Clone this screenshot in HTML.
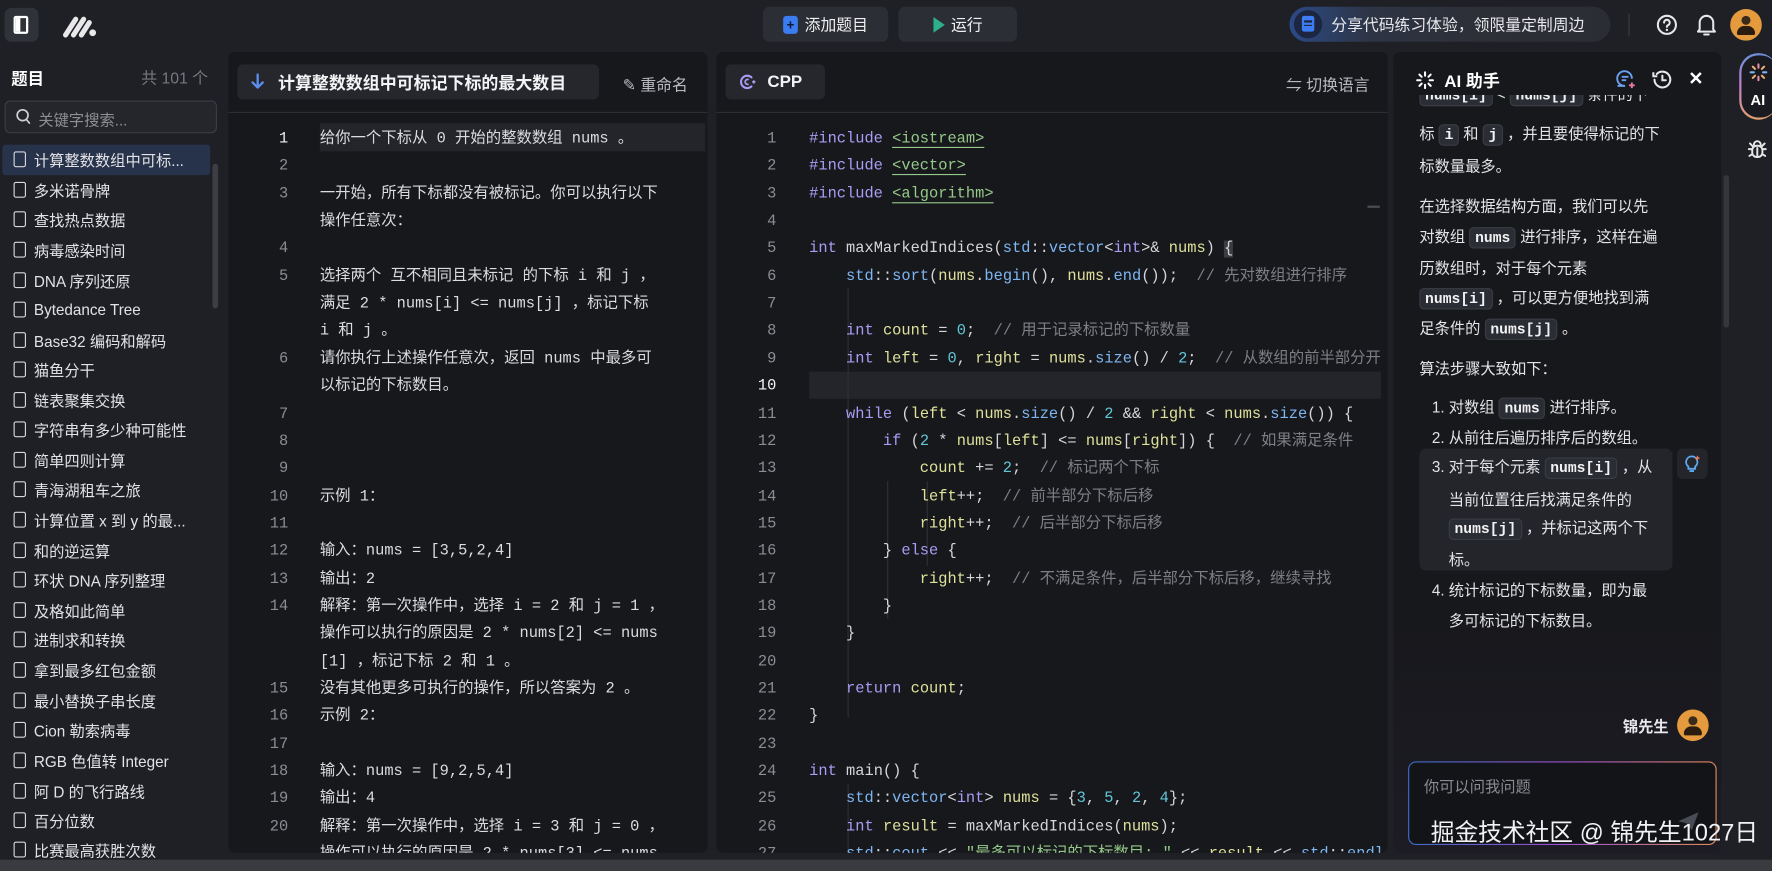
<!DOCTYPE html>
<html><head><meta charset="utf-8">
<style>
html,body{margin:0;padding:0;width:1772px;height:871px;overflow:hidden;background:#1f2025;}
#w{position:relative;width:1568px;height:771px;transform:scale(1.13010,1.12970);transform-origin:0 0;overflow:hidden;background:#1f2025;font-family:"Liberation Sans","Noto Sans CJK SC",sans-serif;color:#e6e6e8;}
.a{position:absolute;}
.btn{position:absolute;background:#2c2e35;border-radius:6px;font-size:14px;color:#f0f0f2;display:flex;align-items:center;justify-content:center;gap:6px;}
.panel{position:absolute;background:#17181c;border-radius:6px;overflow:hidden;}
.mono{font-family:"Liberation Mono","Noto Sans CJK SC",monospace;}
.li{position:absolute;left:12px;font-size:13.5px;color:#e2e2e6;display:flex;align-items:center;gap:7px;height:20px;white-space:nowrap;}
.doc{width:11px;height:14px;border:1.6px solid #d8d8dc;border-radius:2px;box-sizing:border-box;position:relative;}
.row{position:absolute;left:0;height:24.35px;line-height:24.35px;font-size:13.6px;white-space:pre;}
.num{position:absolute;width:40px;text-align:right;color:#8b8d93;}
.k{color:#a99cf5}.f{color:#7eb6f2}.v{color:#dfe09a}.n{color:#62c5d6}.c{color:#7d7f86}.s{color:#95c98a;text-decoration:underline;text-underline-offset:4px}.p{color:#d6d6da}
.ai{position:absolute;left:1256px;font-size:13.5px;color:#e4e4e8;white-space:nowrap;}
.cd{font-family:"Liberation Mono",monospace;font-weight:bold;background:#2b2d34;border:1px solid #3a3c44;border-radius:4px;padding:1px 4px;font-size:13px;color:#f2f2f4;}
</style></head><body><div id="w">

<!-- top bar -->
<div class="a" style="left:4px;top:7px;width:30px;height:30px;background:#30323a;border-radius:6px;"></div>
<div class="a" style="left:12px;top:14px;width:13px;height:16px;border:2px solid #fff;box-sizing:border-box;border-radius:2px;"><div style="position:absolute;left:0;top:0;width:4px;height:12px;background:#fff"></div></div>
<svg class="a" style="left:55px;top:12px" width="32" height="22" viewBox="0 0 32 22"><path d="M3 19 L12 5 M10 19 L19 5 M17 19 L24 8" stroke="#e8e8ea" stroke-width="4.5" stroke-linecap="round"/><circle cx="27" cy="17" r="3" fill="#e8e8ea"/></svg>

<div class="btn" style="left:675px;top:6px;width:111px;height:31px;"><span style="display:inline-block;width:13px;height:16px;background:#3b7cf0;border-radius:3px;color:#0d1b3a;font-size:12px;line-height:16px;text-align:center;font-weight:bold">+</span>添加题目</div>
<div class="btn" style="left:795px;top:6px;width:105px;height:31px;"><span style="display:inline-block;width:0;height:0;border-left:10px solid #2bb08a;border-top:7px solid transparent;border-bottom:7px solid transparent"></span>运行</div>

<div class="a" style="left:1141px;top:6px;width:284px;height:31px;border-radius:16px;background:linear-gradient(90deg,#2c4a86 0%,#2d3444 25%,#2d2f37 60%,#2b2d34 100%);"></div>
<div class="a" style="left:1145px;top:9px;width:25px;height:25px;border-radius:50%;background:#1c2640;"></div>
<div class="a" style="left:1152px;top:14px;width:11px;height:14px;border-radius:2px;background:#3d7cf2;"><div style="margin:4px 2px 0;height:1.5px;background:#1c2640"></div><div style="margin:2px 2px 0;height:1.5px;background:#1c2640"></div></div>
<div class="a" style="left:1178px;top:12px;font-size:14px;color:#e8e8ec;">分享代码练习体验，领限量定制周边</div>
<div class="a" style="left:1441px;top:12px;width:1px;height:20px;background:#3a3c42"></div>
<svg class="a" style="left:1465px;top:12px" width="20" height="20" viewBox="0 0 20 20"><circle cx="10" cy="10" r="8" stroke="#e8e8ea" stroke-width="1.8" fill="none"/><path d="M7.5 8a2.5 2.5 0 1 1 3.5 2.3c-.7.3-1 .8-1 1.5" stroke="#e8e8ea" stroke-width="1.8" fill="none" stroke-linecap="round"/><circle cx="10" cy="14.5" r="1.1" fill="#e8e8ea"/></svg>
<svg class="a" style="left:1500px;top:11px" width="20" height="22" viewBox="0 0 20 22"><path d="M4 15V9a6 6 0 0 1 12 0v6l1.5 2h-15z" stroke="#e8e8ea" stroke-width="1.8" fill="none" stroke-linejoin="round"/><path d="M8 19.5h4" stroke="#e8e8ea" stroke-width="1.8" stroke-linecap="round"/></svg>
<div class="a" style="left:1531px;top:8px;width:28px;height:28px;border-radius:50%;background:#e59a3d;overflow:hidden"><div style="position:absolute;left:10px;top:6px;width:8px;height:8px;border-radius:50%;background:#3a2a1a"></div><div style="position:absolute;left:6px;top:15px;width:16px;height:8px;border-radius:8px 8px 2px 2px;background:#2a1d10"></div></div>

<!-- sidebar -->
<div class="a" style="left:10px;top:59px;font-size:14.5px;font-weight:bold;color:#fff">题目</div>
<div class="a" style="left:125px;top:59px;font-size:14px;color:#76787e">共 101 个</div>
<div class="a" style="left:4px;top:89px;width:188px;height:29px;border:1px solid #3b3d44;border-radius:5px;background:#24262b;box-sizing:border-box"></div>
<svg class="a" style="left:14px;top:96px" width="14" height="15" viewBox="0 0 14 15"><circle cx="6" cy="6" r="4.8" stroke="#d0d0d4" stroke-width="1.5" fill="none"/><path d="M9.5 10l2.5 3" stroke="#d0d0d4" stroke-width="1.5" stroke-linecap="round"/></svg>
<div class="a" style="left:34px;top:95px;font-size:13.5px;color:#8d8f95">关键字搜索...</div>
<div class="a" style="left:2px;top:128px;width:184px;height:27px;background:#27324b;border-radius:3px"></div>
<div class="a" style="left:188px;top:145px;width:5px;height:128px;background:#3c3e44;border-radius:3px"></div>

<div class="li" style="top:131px"><span class="doc"></span>计算整数数组中可标...</div>
<div class="li" style="top:158px"><span class="doc"></span>多米诺骨牌</div>
<div class="li" style="top:184px"><span class="doc"></span>查找热点数据</div>
<div class="li" style="top:211px"><span class="doc"></span>病毒感染时间</div>
<div class="li" style="top:238px"><span class="doc"></span>DNA 序列还原</div>
<div class="li" style="top:264px"><span class="doc"></span>Bytedance Tree</div>
<div class="li" style="top:291px"><span class="doc"></span>Base32 编码和解码</div>
<div class="li" style="top:317px"><span class="doc"></span>猫鱼分干</div>
<div class="li" style="top:344px"><span class="doc"></span>链表聚集交换</div>
<div class="li" style="top:370px"><span class="doc"></span>字符串有多少种可能性</div>
<div class="li" style="top:397px"><span class="doc"></span>简单四则计算</div>
<div class="li" style="top:423px"><span class="doc"></span>青海湖租车之旅</div>
<div class="li" style="top:450px"><span class="doc"></span>计算位置 x 到 y 的最...</div>
<div class="li" style="top:477px"><span class="doc"></span>和的逆运算</div>
<div class="li" style="top:503px"><span class="doc"></span>环状 DNA 序列整理</div>
<div class="li" style="top:530px"><span class="doc"></span>及格如此简单</div>
<div class="li" style="top:556px"><span class="doc"></span>进制求和转换</div>
<div class="li" style="top:583px"><span class="doc"></span>拿到最多红包金额</div>
<div class="li" style="top:610px"><span class="doc"></span>最小替换子串长度</div>
<div class="li" style="top:636px"><span class="doc"></span>Cion 勒索病毒</div>
<div class="li" style="top:663px"><span class="doc"></span>RGB 色值转 Integer</div>
<div class="li" style="top:690px"><span class="doc"></span>阿 D 的飞行路线</div>
<div class="li" style="top:716px"><span class="doc"></span>百分位数</div>
<div class="li" style="top:742px"><span class="doc"></span>比赛最高获胜次数</div>

<!-- problem panel -->
<div class="panel" style="left:202px;top:46px;width:424px;height:709px;">
  <div class="a" style="left:8px;top:11px;width:320px;height:31px;background:#25272d;border-radius:5px"></div>
  <svg class="a" style="left:20px;top:19px" width="12" height="15" viewBox="0 0 12 15"><path d="M6 1v11M1.5 8L6 12.5 10.5 8" stroke="#5b8ff0" stroke-width="2" fill="none" stroke-linecap="round" stroke-linejoin="round"/></svg>
  <div class="a" style="left:44px;top:17px;font-size:15px;font-weight:bold;color:#f4f4f6">计算整数数组中可标记下标的最大数目</div>
  <div class="a" style="left:349px;top:19px;font-size:14px;color:#b8bac0">✎ 重命名</div>
  <div class="a" style="left:0;top:53px;width:424px;height:1px;background:#2c2e34"></div>
  <div class="a" style="left:81px;top:63px;width:341px;height:25px;background:#23252b"></div>
  <div class="a mono" style="left:0;top:66px;width:424px;height:650px;color:#dcdce0">
    <div class="row" style="top:0"><span class="num" style="left:13px;color:#f0f0f2">1</span><span style="position:absolute;left:81px">给你一个下标从 0 开始的整数数组 nums 。</span></div>
    <div class="row" style="top:24.35px"><span class="num" style="left:13px">2</span></div>
    <div class="row" style="top:48.7px"><span class="num" style="left:13px">3</span><span style="position:absolute;left:81px">一开始，所有下标都没有被标记。你可以执行以下</span></div>
    <div class="row" style="top:73.05px"><span style="position:absolute;left:81px">操作任意次：</span></div>
    <div class="row" style="top:97.4px"><span class="num" style="left:13px">4</span></div>
    <div class="row" style="top:121.75px"><span class="num" style="left:13px">5</span><span style="position:absolute;left:81px">选择两个 互不相同且未标记 的下标 i 和 j ，</span></div>
    <div class="row" style="top:146.1px"><span style="position:absolute;left:81px">满足 2 * nums[i] &lt;= nums[j] ，标记下标</span></div>
    <div class="row" style="top:170.45px"><span style="position:absolute;left:81px">i 和 j 。</span></div>
    <div class="row" style="top:194.8px"><span class="num" style="left:13px">6</span><span style="position:absolute;left:81px">请你执行上述操作任意次，返回 nums 中最多可</span></div>
    <div class="row" style="top:219.15px"><span style="position:absolute;left:81px">以标记的下标数目。</span></div>
    <div class="row" style="top:243.5px"><span class="num" style="left:13px">7</span></div>
    <div class="row" style="top:267.85px"><span class="num" style="left:13px">8</span></div>
    <div class="row" style="top:292.2px"><span class="num" style="left:13px">9</span></div>
    <div class="row" style="top:316.55px"><span class="num" style="left:13px">10</span><span style="position:absolute;left:81px">示例 1：</span></div>
    <div class="row" style="top:340.9px"><span class="num" style="left:13px">11</span></div>
    <div class="row" style="top:365.25px"><span class="num" style="left:13px">12</span><span style="position:absolute;left:81px">输入：nums = [3,5,2,4]</span></div>
    <div class="row" style="top:389.6px"><span class="num" style="left:13px">13</span><span style="position:absolute;left:81px">输出：2</span></div>
    <div class="row" style="top:413.95px"><span class="num" style="left:13px">14</span><span style="position:absolute;left:81px">解释：第一次操作中，选择 i = 2 和 j = 1 ，</span></div>
    <div class="row" style="top:438.3px"><span style="position:absolute;left:81px">操作可以执行的原因是 2 * nums[2] &lt;= nums</span></div>
    <div class="row" style="top:462.65px"><span style="position:absolute;left:81px">[1] ，标记下标 2 和 1 。</span></div>
    <div class="row" style="top:487px"><span class="num" style="left:13px">15</span><span style="position:absolute;left:81px">没有其他更多可执行的操作，所以答案为 2 。</span></div>
    <div class="row" style="top:511.35px"><span class="num" style="left:13px">16</span><span style="position:absolute;left:81px">示例 2：</span></div>
    <div class="row" style="top:535.7px"><span class="num" style="left:13px">17</span></div>
    <div class="row" style="top:560.05px"><span class="num" style="left:13px">18</span><span style="position:absolute;left:81px">输入：nums = [9,2,5,4]</span></div>
    <div class="row" style="top:584.4px"><span class="num" style="left:13px">19</span><span style="position:absolute;left:81px">输出：4</span></div>
    <div class="row" style="top:608.75px"><span class="num" style="left:13px">20</span><span style="position:absolute;left:81px">解释：第一次操作中，选择 i = 3 和 j = 0 ，</span></div>
    <div class="row" style="top:633.1px"><span style="position:absolute;left:81px">操作可以执行的原因是 2 * nums[3] &lt;= nums</span></div>
  </div>
</div>

<!-- code panel -->
<div class="panel" style="left:634px;top:46px;width:594px;height:709px;">
  <div class="a" style="left:8px;top:11px;width:88px;height:31px;background:#25272d;border-radius:5px"></div>
  <svg class="a" style="left:20px;top:18px" width="16" height="17" viewBox="0 0 16 17"><path d="M11 4.5A5.5 5.5 0 1 0 11 12.5" stroke="#a99cf5" stroke-width="1.8" fill="none" stroke-linecap="round"/><path d="M8.5 6.5A2.2 2.2 0 1 0 8.5 10.5" stroke="#a99cf5" stroke-width="1.5" fill="none"/><path d="M13 7v3M11.5 8.5h3" stroke="#a99cf5" stroke-width="1.3"/></svg>
  <div class="a" style="left:45px;top:18px;font-size:15px;font-weight:bold;color:#f4f4f6">CPP</div>
  <div class="a" style="left:504px;top:19px;font-size:14px;color:#b8bac0">⇋ 切换语言</div>
  <div class="a" style="left:0;top:53px;width:594px;height:1px;background:#2c2e34"></div>
  <div class="a" style="left:82px;top:283px;width:506px;height:24px;background:#23252b"></div>
  <div class="a" style="left:116px;top:209px;width:1px;height:380px;background:#2e3036"></div>
  <div class="a" style="left:151px;top:380px;width:1px;height:122px;background:#2e3036"></div>
  <div class="a" style="left:186px;top:380px;width:1px;height:75px;background:#2e3036"></div>
  <div class="a" style="left:116px;top:648px;width:1px;height:70px;background:#2e3036"></div>
  <div class="a" style="left:576px;top:136px;width:11px;height:2px;background:#4a4c52"></div>
  <div class="a mono" style="left:0;top:66px;width:588px;height:650px;overflow:hidden;color:#d6d6da">
<div class="row" style="top:0"><span class="num" style="left:13px">1</span><span style="position:absolute;left:82px"><span class="k">#include</span> <span class="s">&lt;iostream&gt;</span></span></div>
<div class="row" style="top:24.35px"><span class="num" style="left:13px">2</span><span style="position:absolute;left:82px"><span class="k">#include</span> <span class="s">&lt;vector&gt;</span></span></div>
<div class="row" style="top:48.7px"><span class="num" style="left:13px">3</span><span style="position:absolute;left:82px"><span class="k">#include</span> <span class="s">&lt;algorithm&gt;</span></span></div>
<div class="row" style="top:73.05px"><span class="num" style="left:13px">4</span></div>
<div class="row" style="top:97.4px"><span class="num" style="left:13px">5</span><span style="position:absolute;left:82px"><span class="k">int</span> maxMarkedIndices(<span class="f">std</span>::<span class="f">vector</span>&lt;<span class="k">int</span>&gt;&amp; <span class="v">nums</span>) <span style="background:#3a3c42">{</span></span></div>
<div class="row" style="top:121.75px"><span class="num" style="left:13px">6</span><span style="position:absolute;left:82px">    <span class="f">std</span>::<span class="f">sort</span>(<span class="v">nums</span>.<span class="f">begin</span>(), <span class="v">nums</span>.<span class="f">end</span>());  <span class="c">// 先对数组进行排序</span></span></div>
<div class="row" style="top:146.1px"><span class="num" style="left:13px">7</span></div>
<div class="row" style="top:170.45px"><span class="num" style="left:13px">8</span><span style="position:absolute;left:82px">    <span class="k">int</span> <span class="v">count</span> = <span class="n">0</span>;  <span class="c">// 用于记录标记的下标数量</span></span></div>
<div class="row" style="top:194.8px"><span class="num" style="left:13px">9</span><span style="position:absolute;left:82px">    <span class="k">int</span> <span class="v">left</span> = <span class="n">0</span>, <span class="v">right</span> = <span class="v">nums</span>.<span class="f">size</span>() / <span class="n">2</span>;  <span class="c">// 从数组的前半部分开始</span></span></div>
<div class="row" style="top:219.15px"><span class="num" style="left:13px;color:#f4f4f6">10</span></div>
<div class="row" style="top:243.5px"><span class="num" style="left:13px">11</span><span style="position:absolute;left:82px">    <span class="k">while</span> (<span class="v">left</span> &lt; <span class="v">nums</span>.<span class="f">size</span>() / <span class="n">2</span> &amp;&amp; <span class="v">right</span> &lt; <span class="v">nums</span>.<span class="f">size</span>()) {</span></div>
<div class="row" style="top:267.85px"><span class="num" style="left:13px">12</span><span style="position:absolute;left:82px">        <span class="k">if</span> (<span class="n">2</span> * <span class="v">nums</span>[<span class="v">left</span>] &lt;= <span class="v">nums</span>[<span class="v">right</span>]) {  <span class="c">// 如果满足条件</span></span></div>
<div class="row" style="top:292.2px"><span class="num" style="left:13px">13</span><span style="position:absolute;left:82px">            <span class="v">count</span> += <span class="n">2</span>;  <span class="c">// 标记两个下标</span></span></div>
<div class="row" style="top:316.55px"><span class="num" style="left:13px">14</span><span style="position:absolute;left:82px">            <span class="v">left</span>++;  <span class="c">// 前半部分下标后移</span></span></div>
<div class="row" style="top:340.9px"><span class="num" style="left:13px">15</span><span style="position:absolute;left:82px">            <span class="v">right</span>++;  <span class="c">// 后半部分下标后移</span></span></div>
<div class="row" style="top:365.25px"><span class="num" style="left:13px">16</span><span style="position:absolute;left:82px">        } <span class="k">else</span> {</span></div>
<div class="row" style="top:389.6px"><span class="num" style="left:13px">17</span><span style="position:absolute;left:82px">            <span class="v">right</span>++;  <span class="c">// 不满足条件，后半部分下标后移，继续寻找</span></span></div>
<div class="row" style="top:413.95px"><span class="num" style="left:13px">18</span><span style="position:absolute;left:82px">        }</span></div>
<div class="row" style="top:438.3px"><span class="num" style="left:13px">19</span><span style="position:absolute;left:82px">    }</span></div>
<div class="row" style="top:462.65px"><span class="num" style="left:13px">20</span></div>
<div class="row" style="top:487px"><span class="num" style="left:13px">21</span><span style="position:absolute;left:82px">    <span class="k">return</span> <span class="v">count</span>;</span></div>
<div class="row" style="top:511.35px"><span class="num" style="left:13px">22</span><span style="position:absolute;left:82px">}</span></div>
<div class="row" style="top:535.7px"><span class="num" style="left:13px">23</span></div>
<div class="row" style="top:560.05px"><span class="num" style="left:13px">24</span><span style="position:absolute;left:82px"><span class="k">int</span> main() {</span></div>
<div class="row" style="top:584.4px"><span class="num" style="left:13px">25</span><span style="position:absolute;left:82px">    <span class="f">std</span>::<span class="f">vector</span>&lt;<span class="k">int</span>&gt; <span class="v">nums</span> = {<span class="n">3</span>, <span class="n">5</span>, <span class="n">2</span>, <span class="n">4</span>};</span></div>
<div class="row" style="top:608.75px"><span class="num" style="left:13px">26</span><span style="position:absolute;left:82px">    <span class="k">int</span> <span class="v">result</span> = maxMarkedIndices(<span class="v">nums</span>);</span></div>
<div class="row" style="top:633.1px"><span class="num" style="left:13px">27</span><span style="position:absolute;left:82px">    <span class="f">std</span>::<span class="f">cout</span> &lt;&lt; <span class="s" style="text-decoration:none">"最多可以标记的下标数目: "</span> &lt;&lt; <span class="v">result</span> &lt;&lt; <span class="f">std</span>::<span class="f">endl</span>;</span></div>
  </div>
</div>

<!-- AI panel -->
<div class="panel" style="left:1233px;top:46px;width:290px;height:709px;background:linear-gradient(180deg,#17181c 0%,#17181c 70%,#1d1b24 100%);"></div>
<div class="a" style="left:1233px;top:84px;width:290px;height:480px;overflow:hidden">
  <div class="ai" style="left:23px;top:-12px"><span class="cd">nums[i]</span> &lt; <span class="cd">nums[j]</span> 条件的下</div>
</div>
<div class="a" style="left:1233px;top:46px;width:290px;height:38px;background:#17181c;border-radius:6px 6px 0 0"></div>
<svg class="a" style="left:1253px;top:63px" width="16" height="16" viewBox="0 0 16 16"><g stroke="#fff" stroke-width="1.8" stroke-linecap="round"><path d="M8 1v3M8 12v3M1 8h3M12 8h3M3 3l2 2M11 11l2 2M13 3l-2 2M3 13l2-2"/></g></svg>
<div class="a" style="left:1278px;top:61px;font-size:15px;font-weight:bold;color:#fff">AI 助手</div>
<svg class="a" style="left:1430px;top:61px" width="18" height="19" viewBox="0 0 18 19"><path d="M14 8A6.5 6.5 0 1 0 8 15H2" stroke="#6aa0f0" stroke-width="1.7" fill="none" stroke-linecap="round"/><path d="M5 7h6M5 10h4" stroke="#6aa0f0" stroke-width="1.6"/><path d="M14 12v5M11.5 14.5h5" stroke="#e47aa5" stroke-width="1.7"/></svg>
<svg class="a" style="left:1461px;top:61px" width="19" height="19" viewBox="0 0 19 19"><path d="M3 9.5A7 7 0 1 0 5 4.5" stroke="#e8e8ea" stroke-width="1.8" fill="none" stroke-linecap="round"/><path d="M2 3v3.5h3.5" stroke="#e8e8ea" stroke-width="1.8" fill="none"/><path d="M10 6v4h3" stroke="#e8e8ea" stroke-width="1.8" fill="none" stroke-linecap="round"/></svg>
<div class="a" style="left:1494px;top:60px;font-size:16px;font-weight:bold;color:#fff">✕</div>
<div class="a" style="left:1525px;top:155px;width:5px;height:135px;background:#34363c;border-radius:3px"></div>

<div class="ai" style="top:107px">标 <span class="cd">i</span> 和 <span class="cd">j</span> ，并且要使得标记的下</div>
<div class="ai" style="top:136px">标数量最多。</div>
<div class="ai" style="top:171px">在选择数据结构方面，我们可以先</div>
<div class="ai" style="top:198px">对数组 <span class="cd">nums</span> 进行排序，这样在遍</div>
<div class="ai" style="top:226px">历数组时，对于每个元素</div>
<div class="ai" style="top:252px"><span class="cd">nums[i]</span> ，可以更方便地找到满</div>
<div class="ai" style="top:279px">足条件的 <span class="cd">nums[j]</span> 。</div>
<div class="ai" style="top:315px">算法步骤大致如下：</div>
<div class="a" style="left:1256px;top:397px;width:224px;height:108px;background:#23252b;border-radius:6px"></div>
<div class="a" style="left:1484px;top:397px;width:27px;height:27px;background:#23252b;border-radius:5px"></div>
<svg class="a" style="left:1490px;top:402px" width="15" height="17" viewBox="0 0 15 17"><path d="M7 2a5 5 0 0 0-3 9v2h6v-2a5 5 0 0 0-3-9z" stroke="#5fa8f0" stroke-width="1.6" fill="none"/><path d="M5 15h4" stroke="#5fa8f0" stroke-width="1.6"/><path d="M12 1l.8 1.7L14.5 3.5 12.8 4.3 12 6 11.2 4.3 9.5 3.5 11.2 2.7z" fill="#f07a5a"/></svg>
<div class="ai" style="left:1267px;top:349px">1. 对数组 <span class="cd">nums</span> 进行排序。</div>
<div class="ai" style="left:1267px;top:376px">2. 从前往后遍历排序后的数组。</div>
<div class="ai" style="left:1267px;top:402px">3. 对于每个元素 <span class="cd">nums[i]</span> ，从</div>
<div class="ai" style="left:1282px;top:431px">当前位置往后找满足条件的</div>
<div class="ai" style="left:1282px;top:456px"><span class="cd">nums[j]</span> ，并标记这两个下</div>
<div class="ai" style="left:1282px;top:484px">标。</div>
<div class="ai" style="left:1267px;top:511px">4. 统计标记的下标数量，即为最</div>
<div class="ai" style="left:1282px;top:538px">多可标记的下标数目。</div>

<div class="a" style="left:1436px;top:632px;font-size:13.5px;font-weight:bold;color:#e8e8ec">锦先生</div>
<div class="a" style="left:1484px;top:628px;width:28px;height:28px;border-radius:50%;background:#e59a3d;overflow:hidden"><div style="position:absolute;left:10px;top:6px;width:8px;height:8px;border-radius:50%;background:#3a2a1a"></div><div style="position:absolute;left:6px;top:15px;width:16px;height:8px;border-radius:8px 8px 2px 2px;background:#2a1d10"></div></div>

<div class="a" style="left:1246px;top:674px;width:273px;height:74px;border-radius:7px;background:linear-gradient(90deg,#3a6cc8,#9b4fd0,#e08a5a);"></div>
<div class="a" style="left:1247px;top:675px;width:271px;height:72px;border-radius:6px;background:#131418"></div>
<div class="a" style="left:1260px;top:685px;font-size:13.5px;color:#8a8c92">你可以问我问题</div>
<svg class="a" style="left:1483px;top:717px" width="22" height="20" viewBox="0 0 22 20"><path d="M2 10L20 2 14 18 10 12z" fill="#4a4c55"/></svg>
<div class="a" style="left:1266px;top:721px;font-size:21px;color:#f2f2f4;white-space:nowrap">掘金技术社区 @ 锦先生1027日</div>

<!-- right strip -->
<div class="a" style="left:1539px;top:47px;width:34px;height:59px;border-radius:17px;background:linear-gradient(180deg,#6a8fd8,#c07fc8,#e0a070);"></div>
<div class="a" style="left:1541px;top:49px;width:32px;height:55px;border-radius:15px;background:#1a1b20"></div>
<svg class="a" style="left:1548px;top:56px" width="16" height="16" viewBox="0 0 16 16"><g stroke-width="1.8" stroke-linecap="round"><path d="M8 1v3M8 12v3" stroke="#e890b0"/><path d="M1 8h3M12 8h3" stroke="#7fb0f0"/><path d="M3 3l2 2M11 11l2 2M13 3l-2 2M3 13l2-2" stroke="#f0b070"/></g></svg>
<div class="a" style="left:1549px;top:81px;font-size:13px;font-weight:bold;color:#fff">AI</div>
<svg class="a" style="left:1546px;top:123px" width="18" height="19" viewBox="0 0 18 19"><g stroke="#e8e8ea" stroke-width="1.7" fill="none" stroke-linecap="round"><path d="M6 5a3 3 0 0 1 6 0"/><rect x="4.5" y="6" width="9" height="10" rx="4"/><path d="M9 8v7M1.5 9h3M13.5 9h3M2 15l2.5-1.5M16 15l-2.5-1.5M2.5 4l2.5 2.5M15.5 4L13 6.5"/></g></svg>

<!-- bottom bar -->
<div class="a" style="left:0;top:761px;width:1568px;height:10px;background:#3a3b40"></div>
</div></body></html>
